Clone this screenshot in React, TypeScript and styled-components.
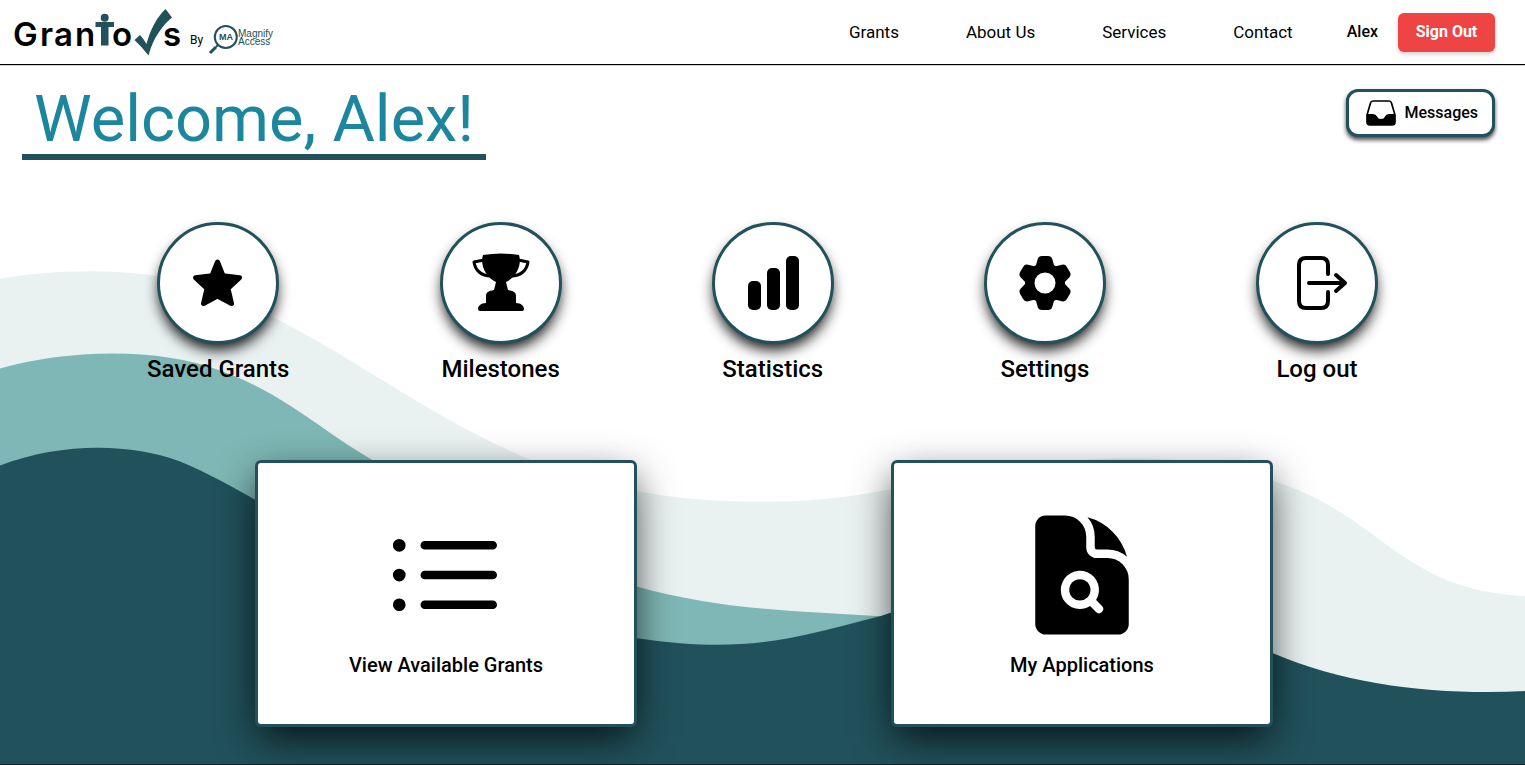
import React from "react";
import styled, { createGlobalStyle } from "styled-components";
import { HiDocumentMagnifyingGlass, HiListBullet } from "react-icons/hi2";

const teal = "#21515b";

const GlobalStyle = createGlobalStyle`
  * { box-sizing: border-box; }
  html, body, #root { min-height: 100vh; }
  body { margin: 0; background: #fff; color: #000; font-family: Roboto, "Liberation Sans", sans-serif; }
  #root { display: flex; }
  a { color: inherit; text-decoration: none; }
`;

const Page = styled.div`
  position: relative;
  isolation: isolate;
  flex: 1;
  display: flex;
  flex-direction: column;
  border-bottom: 1px solid #1c2226;
`;

const Backdrop = styled.svg`
  position: absolute;
  inset: 0;
  width: 100%;
  height: 100%;
  z-index: -1;
`;

const Header = styled.header`
  display: flex;
  align-items: center;
  justify-content: space-between;
  height: 65px;
  padding: 0 30px 0 12px;
  border-bottom: 1px solid #000;
  box-shadow: 0 0 1px #000;
  background: #fff;
`;

const Brand = styled.a`
  display: flex;
`;

const Nav = styled.nav`
  display: flex;
  align-items: center;
  gap: 67px;
  font-size: 17px;
  line-height: 24px;
`;

const Account = styled.div`
  display: flex;
  align-items: center;
  gap: 20px;
  margin-left: -13px;
  font-size: 16px;
  font-weight: 500;
`;

const SignOut = styled.button`
  width: 97px;
  height: 39px;
  padding: 0;
  border: 0;
  border-radius: 6px;
  background: #ef4444;
  color: #fff;
  font: 700 16px/24px Roboto, "Liberation Sans", sans-serif;
  box-shadow: 0 2px 4px rgba(0, 0, 0, 0.2);
`;

const TitleRow = styled.div`
  display: flex;
  align-items: flex-start;
  justify-content: space-between;
  padding: 24px 30px 0 22px;
`;

const Title = styled.h1`
  margin: 0;
  padding: 0 12px 5px;
  border-bottom: 6px solid ${teal};
  color: #1b869e;
  font-size: 65px;
  font-weight: 400;
  line-height: 60px;
`;

const Messages = styled.button`
  display: flex;
  align-items: center;
  gap: 8px;
  height: 48px;
  padding: 0 14px 0 17px;
  border: 3px solid ${teal};
  border-radius: 12px;
  background: #fff;
  color: #000;
  font: 500 16px/24px Roboto, "Liberation Sans", sans-serif;
  box-shadow: 0 3px 4px rgba(0, 0, 0, 0.7);
`;

const Shortcuts = styled.nav`
  display: flex;
  justify-content: space-between;
  padding: 62px 147px 0;
`;

const Shortcut = styled.a`
  display: flex;
  flex-direction: column;
  align-items: center;
  min-width: 122px;
  font-size: 24px;
  font-weight: 500;
  line-height: 32px;
`;

const Disc = styled.span`
  display: grid;
  place-items: center;
  width: 122px;
  height: 122px;
  margin-bottom: 9px;
  border: 3px solid ${teal};
  border-radius: 50%;
  background: #fff;
  box-shadow: 0 8px 14px -2px rgba(0, 0, 0, 0.9);
`;

const Cards = styled.main`
  display: flex;
  justify-content: space-around;
  padding: 75px 125px 37px 128px;
`;

const Card = styled.a`
  display: flex;
  flex-direction: column;
  align-items: center;
  width: 382px;
  height: 267px;
  padding-top: 44px;
  border: 3px solid ${teal};
  border-radius: 6px;
  background: #fff;
  font-size: 20px;
  font-weight: 500;
  line-height: 28px;
  box-shadow: 0 14px 40px -4px rgba(0, 0, 0, 0.8);

  svg { margin-bottom: 8px; }
`;

const Logo = () => (
  <svg width="264" height="56" viewBox="0 0 264 56" role="img" aria-label="Grantors by Magnify Access">
    <g fontFamily="Inter, sans-serif" fontSize="33" fontWeight="600">
      <text x="1" y="42">G</text>
      <text x="28" y="42">r</text>
      <text x="42" y="42">a</text>
      <text x="63" y="42">n</text>
      <text x="100" y="42">o</text>
      <text x="151" y="42">s</text>
    </g>
    <g fill={teal}>
      <circle cx="92.700" cy="13.800" r="4" />
      <path d="M83.500 18H102v5H96.500v18.500H89V23H83.500z" />
      <path d="M122.500 36L128 31Q131 34 134.500 40C138 27 144 14 153.500 5L160 13.500C150 22 141 34 136.500 51.500Q130 43 122.500 36z" />
    </g>
    <text x="178" y="40" fontFamily="Roboto, sans-serif" fontSize="12">By</text>
    <g fill="none" stroke={teal}>
      <circle cx="213.800" cy="33" r="11" strokeWidth="2" />
      <path d="M206 41l-2 2" strokeWidth="2" />
      <path d="M204 43l-6 6" strokeWidth="3" />
    </g>
    <g fill={teal} fontFamily="Liberation Sans, sans-serif">
      <text x="207" y="36" fontSize="9" fontWeight="700">MA</text>
      <text x="226" y="33" fontSize="10">Magnify</text>
      <text x="226" y="41" fontSize="10">Access</text>
    </g>
  </svg>
);

const InboxIcon = () => (
  <svg width="30" height="26" viewBox="0 0 30 26" aria-hidden="true">
    <path d="M7 1h16q2 0 2.500 2L29 15v7q0 3-3 3H4q-3 0-3-3v-7L4.500 3Q5 1 7 1z" fill="#fff" stroke="#000" strokeWidth="1.700" />
    <path d="M1 14h6q3 0 4 2.500 1 2.500 4 2.500t4-2.500Q20 14 23 14h6v8q0 3-3 3H4q-3 0-3-3z" />
  </svg>
);

const StarIcon = () => (
  <svg width="68" height="68" viewBox="0 0 68 68" aria-hidden="true">
    <path d="M33.500 13L39 26.700 55.500 28.700 44 39.500 47.500 54.500 33.500 47 19.500 54.500 23 39.500 11.500 28.700 28 26.700z" stroke="#000" strokeWidth="5" strokeLinejoin="round" />
  </svg>
);

const TrophyIcon = () => (
  <svg width="68" height="68" viewBox="0 0 68 68" aria-hidden="true">
    <path d="M16 6Q34 3 52 6C55 15 50 28 39 33L41 41C46 42 49 43 49 47V54C54 54 57 57 57 60Q57 62 55 62H13Q11 62 11 60C11 57 14 54 19 54V47C19 43 22 42 27 41L29 33C18 28 13 15 16 6z" />
    <path d="M17 11L7 13C8 21 14 27 24 27M51 11L61 13C60 21 54 27 44 27" fill="none" stroke="#000" strokeWidth="3" strokeLinejoin="round" />
  </svg>
);

const BarsIcon = () => (
  <svg width="68" height="68" viewBox="0 0 68 68" aria-hidden="true">
    <rect x="9" y="32" width="13" height="29" rx="5" />
    <rect x="28" y="19" width="13" height="42" rx="5" />
    <rect x="47" y="7" width="13" height="54" rx="5" />
  </svg>
);

const GearIcon = () => (
  <svg width="68" height="68" viewBox="0 0 68 68" aria-hidden="true">
    <g stroke="#000" strokeWidth="9" strokeLinejoin="round">
      {[0, 60, 120].map((angle) => (
        <path key={angle} d="M31 11.500h6l2 7v31l-2 7h-6l-2-7v-31z" transform={`rotate(${angle} 34 34)`} />
      ))}
    </g>
    <circle cx="34" cy="34" r="20" />
    <circle cx="34" cy="34" r="10.500" fill="#fff" />
  </svg>
);

const ExitIcon = () => (
  <svg width="68" height="68" viewBox="0 0 68 68" fill="none" stroke="#000" strokeWidth="4" strokeLinecap="round" strokeLinejoin="round" aria-hidden="true">
    <path d="M45 25V16Q45 9 38 9H23Q16 9 16 16V52Q16 59 23 59H38Q45 59 45 52V43" />
    <path d="M26 34H62M53 26L62 34 53 42" />
  </svg>
);

const shortcuts = [
  { label: "Saved Grants", Icon: StarIcon },
  { label: "Milestones", Icon: TrophyIcon },
  { label: "Statistics", Icon: BarsIcon },
  { label: "Settings", Icon: GearIcon },
  { label: "Log out", Icon: ExitIcon },
];

export default function App() {
  return (
    <>
      <GlobalStyle />
      <Page>
        <Backdrop viewBox="0 0 1525 765" preserveAspectRatio="none" aria-hidden="true">
          <path fill="#e9f2f1" d="M0 279C70 267 160 268 220 293C340 343 420 415 530 460C620 497 700 504 790 502C880 500 950 470 1090 460C1180 455 1230 466 1280 484C1385 520 1400 590 1525 597V765H0z" />
          <path fill="#7eb7b5" d="M0 369C70 349 160 348 220 371C290 396 330 440 390 470C480 515 550 562 636 587C720 611 800 612 880 617L910 765H0z" />
          <path fill={teal} d="M0 466C60 443 130 443 180 462C260 495 340 560 430 595C510 626 570 632 637 639C750 656 800 637 880 617C960 590 1060 580 1150 605C1220 625 1240 640 1273 654C1350 687 1440 696 1525 692V765H0z" />
        </Backdrop>
        <Header>
          <Brand href="#"><Logo /></Brand>
          <Nav>
            <a href="#grants">Grants</a>
            <a href="#about">About Us</a>
            <a href="#services">Services</a>
            <a href="#contact">Contact</a>
            <Account>
              <span>Alex</span>
              <SignOut type="button">Sign Out</SignOut>
            </Account>
          </Nav>
        </Header>
        <TitleRow>
          <Title>Welcome, Alex!</Title>
          <Messages type="button"><InboxIcon />Messages</Messages>
        </TitleRow>
        <Shortcuts aria-label="Dashboard">
          {shortcuts.map(({ label, Icon }) => (
            <Shortcut key={label} href="#">
              <Disc><Icon /></Disc>
              {label}
            </Shortcut>
          ))}
        </Shortcuts>
        <Cards>
          <Card href="#available"><HiListBullet size={136} aria-hidden="true" />View Available Grants</Card>
          <Card href="#applications"><HiDocumentMagnifyingGlass size={136} aria-hidden="true" />My Applications</Card>
        </Cards>
      </Page>
    </>
  );
}
